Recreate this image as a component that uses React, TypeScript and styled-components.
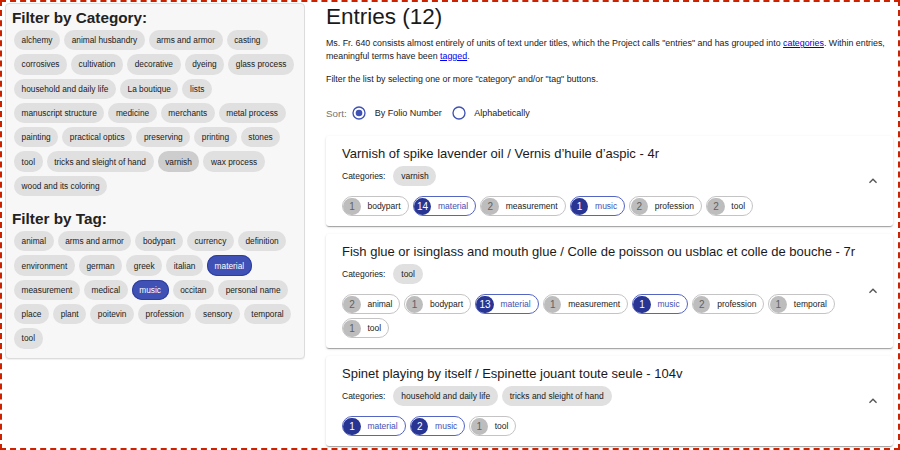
import React from 'react';
import styled, { createGlobalStyle } from 'styled-components';

const GlobalStyle = createGlobalStyle`
  html, body { margin: 0; padding: 0; background: #fff; }
  body { font-family: "Liberation Sans", Arial, Helvetica, sans-serif; color: rgba(0,0,0,0.87); }
  * { box-sizing: border-box; }
`;

const Frame = styled.div`
  width: 900px;
  height: 450px;
  border: 2px dashed #cc2200;
  overflow: hidden;
  display: grid;
  grid-template-columns: 300px 1fr;
  column-gap: 21px;
  align-items: start;
  padding: 1px 5px 0 3px;
`;

const FilterPanel = styled.aside`
  background: #f8f7f8;
  border: 1px solid #dcdcdc;
  border-radius: 4px;
  box-shadow: 0 1px 1px rgba(0,0,0,0.06);
  padding: 5px 4px 7px 6px;
`;

const FilterSection = styled.section<{ $spaced?: boolean }>`
  margin-top: ${p => (p.$spaced ? '12px' : '0')};
`;

const FilterHeading = styled.h2`
  margin: 0 0 1px;
  font-size: 15.3px;
  line-height: 18px;
  font-weight: 700;
  color: #222;
`;

const ChipWrap = styled.div`
  display: flex;
  flex-wrap: wrap;
`;

const FilterChip = styled.span<{ $selected?: boolean; $dim?: boolean }>`
  display: inline-flex;
  align-items: center;
  height: 20.3px;
  margin: 2px;
  padding: 0 7.6px;
  border-radius: 10.2px;
  font-size: 8.3px;
  white-space: nowrap;
  background: ${p => (p.$selected ? '#3f51b5' : p.$dim ? '#cdcdcd' : '#e0e0e0')};
  color: ${p => (p.$selected ? '#fff' : '#1a1a1a')};
  box-shadow: ${p => (p.$selected ? 'inset 0 0 0 1px #2f3e9e' : 'none')};
`;

const Main = styled.main`
  display: flex;
  flex-direction: column;
  min-width: 0;
`;

const PageTitle = styled.h1`
  margin: 0;
  font-size: 22.5px;
  line-height: 28px;
  font-weight: 400;
  color: #1a1a1a;
`;

const Para = styled.p<{ $gap: number }>`
  margin: ${p => p.$gap}px 0 0;
  font-size: 8.85px;
  line-height: 12.5px;
  color: #1a1a1a;
`;

const Link = styled.a`
  color: #0000ee;
  text-decoration: underline;
`;

const SortRow = styled.div`
  display: flex;
  align-items: center;
  height: 28px;
  margin-top: 13.75px;
  margin-bottom: 9px;
`;

const SortLabel = styled.span`
  font-size: 9.8px;
  color: #757575;
  margin-right: 4.7px;
`;

const RadioOption = styled.label`
  display: inline-flex;
  align-items: center;
  font-size: 9px;
  color: #1a1a1a;
  margin-right: 9.3px;
  svg { margin-right: 7.3px; flex: none; }
`;

const EntryCard = styled.article`
  display: flex;
  align-items: center;
  background: #fff;
  border-radius: 3px;
  box-shadow: 0 2px 1px -1px rgba(0,0,0,0.2), 0 1px 1px 0 rgba(0,0,0,0.14), 0 1px 3px 0 rgba(0,0,0,0.12);
  padding: 9.5px 12px 10px 16px;
  margin-bottom: 8px;
`;

const EntryBody = styled.div`
  flex: 1;
  min-width: 0;
  margin-right: 3px;
`;

const EntryTitle = styled.h3`
  margin: 0;
  font-size: 13px;
  line-height: 16px;
  font-weight: 400;
  color: #1a1a1a;
  white-space: nowrap;
`;

const CategoryRow = styled.div`
  display: flex;
  align-items: center;
  margin-top: 4px;
  gap: 4px;
`;

const CategoryLabel = styled.span`
  font-size: 8.5px;
  color: #1a1a1a;
  margin-right: 4px;
`;

const CategoryChip = styled.span`
  display: inline-flex;
  align-items: center;
  height: 20px;
  padding: 0 7.8px;
  border-radius: 10px;
  background: #e0e0e0;
  font-size: 8.5px;
  color: #1a1a1a;
  white-space: nowrap;
`;

const TagRow = styled.div`
  display: flex;
  flex-wrap: wrap;
  gap: 4px;
  margin-top: 10.5px;
  max-width: 510px;
`;

const TagChip = styled.span<{ $primary?: boolean }>`
  display: inline-flex;
  align-items: center;
  height: 20px;
  border-radius: 10px;
  border: 1px solid ${p => (p.$primary ? '#5565c2' : '#c4c4c4')};
  background: #fff;
  white-space: nowrap;
`;

const TagCount = styled.span<{ $primary?: boolean }>`
  display: inline-flex;
  align-items: center;
  justify-content: center;
  width: 17.5px;
  height: 17.5px;
  margin-left: 0.25px;
  border-radius: 50%;
  background: ${p => (p.$primary ? '#283593' : '#bdbdbd')};
  color: ${p => (p.$primary ? '#fff' : '#616161')};
  font-size: 10px;
`;

const TagLabel = styled.span<{ $primary?: boolean }>`
  padding: 0 7px 0 6.7px;
  font-size: 8.5px;
  color: ${p => (p.$primary ? '#3f51b5' : '#1a1a1a')};
`;

const ExpandButton = styled.span`
  display: inline-flex;
  width: 16px;
  height: 16px;
  flex: none;
  color: #555;
`;

const categories = [
  'alchemy', 'animal husbandry', 'arms and armor', 'casting', 'corrosives', 'cultivation',
  'decorative', 'dyeing', 'glass process', 'household and daily life', 'La boutique', 'lists',
  'manuscript structure', 'medicine', 'merchants', 'metal process', 'painting', 'practical optics',
  'preserving', 'printing', 'stones', 'tool', 'tricks and sleight of hand', 'varnish', 'wax process',
  'wood and its coloring',
];

const tags = [
  'animal', 'arms and armor', 'bodypart', 'currency', 'definition', 'environment', 'german',
  'greek', 'italian', 'material', 'measurement', 'medical', 'music', 'occitan', 'personal name',
  'place', 'plant', 'poitevin', 'profession', 'sensory', 'temporal', 'tool',
];

const selectedTags = ['material', 'music'];

type Entry = { title: string; cats: string[]; tags: [number, string][] };

const entries: Entry[] = [
  {
    title: 'Varnish of spike lavender oil / Vernis d’huile d’aspic - 4r',
    cats: ['varnish'],
    tags: [[1, 'bodypart'], [14, 'material'], [2, 'measurement'], [1, 'music'], [2, 'profession'], [2, 'tool']],
  },
  {
    title: 'Fish glue or isinglass and mouth glue / Colle de poisson ou usblac et colle de bouche - 7r',
    cats: ['tool'],
    tags: [[2, 'animal'], [1, 'bodypart'], [13, 'material'], [1, 'measurement'], [1, 'music'], [2, 'profession'], [1, 'temporal'], [1, 'tool']],
  },
  {
    title: 'Spinet playing by itself / Espinette jouant toute seule - 104v',
    cats: ['household and daily life', 'tricks and sleight of hand'],
    tags: [[1, 'material'], [2, 'music'], [1, 'tool']],
  },
];

const RadioIcon = ({ checked }: { checked?: boolean }) => (
  <svg width="16" height="16" viewBox="0 0 24 24" aria-hidden="true">
    <circle cx="12" cy="12" r="9" fill="none" stroke="#3f51b5" strokeWidth="2" />
    {checked && <circle cx="12" cy="12" r="5" fill="#3f51b5" />}
  </svg>
);

const ChevronUp = () => (
  <svg width="16" height="16" viewBox="0 0 24 24" fill="currentColor" aria-hidden="true">
    <path d="M12 8l-6 6 1.41 1.41L12 10.83l4.59 4.58L18 14z" />
  </svg>
);

export default function App() {
  return (
    <>
      <GlobalStyle />
      <Frame>
        <FilterPanel>
          <FilterSection>
            <FilterHeading>Filter by Category:</FilterHeading>
            <ChipWrap>
              {categories.map(c => (
                <FilterChip key={c} $dim={c === 'varnish'}>{c}</FilterChip>
              ))}
            </ChipWrap>
          </FilterSection>
          <FilterSection $spaced>
            <FilterHeading>Filter by Tag:</FilterHeading>
            <ChipWrap>
              {tags.map(t => (
                <FilterChip key={t} $selected={selectedTags.includes(t)}>{t}</FilterChip>
              ))}
            </ChipWrap>
          </FilterSection>
        </FilterPanel>

        <Main>
          <PageTitle>Entries (12)</PageTitle>
          <Para $gap={6}>
            Ms. Fr. 640 consists almost entirely of units of text under titles, which the Project calls "entries" and has grouped into{' '}
            <Link href="#">categories</Link>. Within entries, meaningful terms have been <Link href="#">tagged</Link>.
          </Para>
          <Para $gap={11}>Filter the list by selecting one or more "category" and/or "tag" buttons.</Para>
          <SortRow>
            <SortLabel>Sort:</SortLabel>
            <RadioOption>
              <RadioIcon checked />
              By Folio Number
            </RadioOption>
            <RadioOption>
              <RadioIcon />
              Alphabetically
            </RadioOption>
          </SortRow>

          {entries.map(e => (
            <EntryCard key={e.title}>
              <EntryBody>
                <EntryTitle>{e.title}</EntryTitle>
                <CategoryRow>
                  <CategoryLabel>Categories:</CategoryLabel>
                  {e.cats.map(c => (
                    <CategoryChip key={c}>{c}</CategoryChip>
                  ))}
                </CategoryRow>
                <TagRow>
                  {e.tags.map(([n, t]) => {
                    const primary = selectedTags.includes(t);
                    return (
                      <TagChip key={t} $primary={primary}>
                        <TagCount $primary={primary}>{n}</TagCount>
                        <TagLabel $primary={primary}>{t}</TagLabel>
                      </TagChip>
                    );
                  })}
                </TagRow>
              </EntryBody>
              <ExpandButton>
                <ChevronUp />
              </ExpandButton>
            </EntryCard>
          ))}
        </Main>
      </Frame>
    </>
  );
}
